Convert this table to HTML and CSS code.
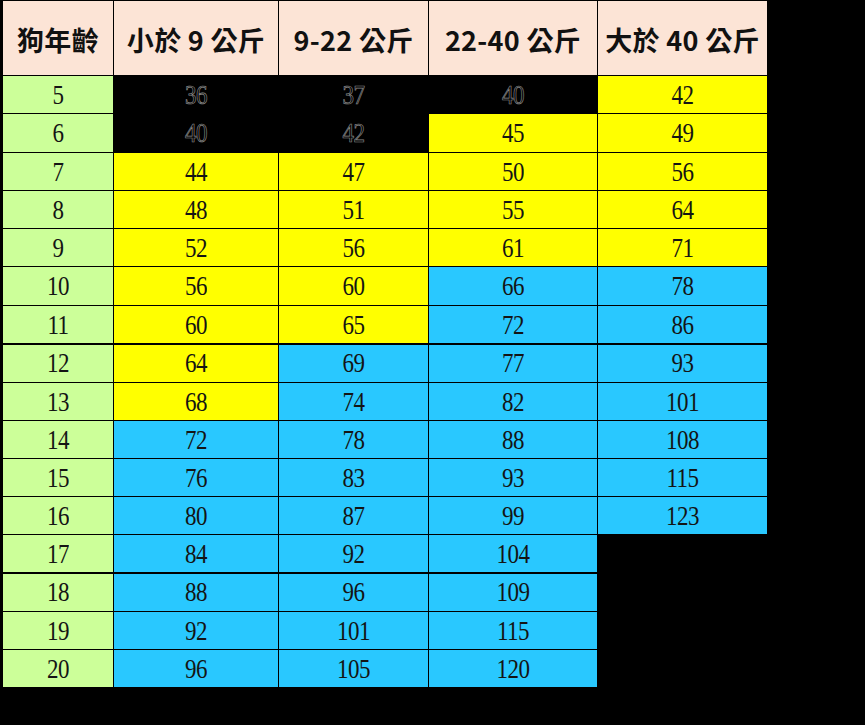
FILE: index.html
```html
<!DOCTYPE html>
<html lang="zh-Hant">
<head>
<meta charset="utf-8">
<title>狗年齡對照表</title>
<link rel="stylesheet" href="styles.css">
</head>
<body>
<div class="sheet">
  <div class="hd">狗年齡</div>
  <div class="hd">小於 9 公斤</div>
  <div class="hd">9-22 公斤</div>
  <div class="hd">22-40 公斤</div>
  <div class="hd">大於 40 公斤</div>

  <div class="age"><span>5</span></div><div class="dk"><span>36</span></div><div class="dk"><span>37</span></div><div class="dk"><span>40</span></div><div class="y"><span>42</span></div>
  <div class="age"><span>6</span></div><div class="dk"><span>40</span></div><div class="dk"><span>42</span></div><div class="y"><span>45</span></div><div class="y"><span>49</span></div>
  <div class="age"><span>7</span></div><div class="y"><span>44</span></div><div class="y"><span>47</span></div><div class="y"><span>50</span></div><div class="y"><span>56</span></div>
  <div class="age"><span>8</span></div><div class="y"><span>48</span></div><div class="y"><span>51</span></div><div class="y"><span>55</span></div><div class="y"><span>64</span></div>
  <div class="age"><span>9</span></div><div class="y"><span>52</span></div><div class="y"><span>56</span></div><div class="y"><span>61</span></div><div class="y"><span>71</span></div>
  <div class="age"><span>10</span></div><div class="y"><span>56</span></div><div class="y"><span>60</span></div><div class="b"><span>66</span></div><div class="b"><span>78</span></div>
  <div class="age"><span>11</span></div><div class="y"><span>60</span></div><div class="y"><span>65</span></div><div class="b"><span>72</span></div><div class="b"><span>86</span></div>
  <div class="age tk"><span>12</span></div><div class="y tk"><span>64</span></div><div class="b tk"><span>69</span></div><div class="b tk"><span>77</span></div><div class="b tk"><span>93</span></div>
  <div class="age"><span>13</span></div><div class="y"><span>68</span></div><div class="b"><span>74</span></div><div class="b"><span>82</span></div><div class="b"><span>101</span></div>
  <div class="age"><span>14</span></div><div class="b"><span>72</span></div><div class="b"><span>78</span></div><div class="b"><span>88</span></div><div class="b"><span>108</span></div>
  <div class="age"><span>15</span></div><div class="b"><span>76</span></div><div class="b"><span>83</span></div><div class="b"><span>93</span></div><div class="b"><span>115</span></div>
  <div class="age"><span>16</span></div><div class="b"><span>80</span></div><div class="b"><span>87</span></div><div class="b"><span>99</span></div><div class="b"><span>123</span></div>
  <div class="age"><span>17</span></div><div class="b"><span>84</span></div><div class="b"><span>92</span></div><div class="b"><span>104</span></div><div class="nil"></div>
  <div class="age tk"><span>18</span></div><div class="b tk"><span>88</span></div><div class="b tk"><span>96</span></div><div class="b tk"><span>109</span></div><div class="nil"></div>
  <div class="age"><span>19</span></div><div class="b"><span>92</span></div><div class="b"><span>101</span></div><div class="b"><span>115</span></div><div class="nil"></div>
  <div class="age"><span>20</span></div><div class="b"><span>96</span></div><div class="b"><span>105</span></div><div class="b"><span>120</span></div><div class="nil"></div>
</div>
</body>
</html>
```
FILE: styles.css
```css
html, body {
  margin: 0;
  padding: 0;
  background: #000;
  width: 865px;
  height: 725px;
  overflow: hidden;
}

.sheet {
  display: grid;
  grid-template-columns: 110px 164px 149px 168px 169px;
  grid-template-rows: 74px 37px 38px 37px 37px 37px 38px 37px 38px 37px 37px 37px 37px 37px 38px 37px 37px;
  gap: 1px;
  padding: 1px 0 0 3px;
  width: max-content;
  background: #000;
}

.sheet > div {
  display: flex;
  align-items: center;
  justify-content: center;
  font-family: "Liberation Serif", "Times New Roman", serif;
  font-size: 23px;
  color: #141414;
}

.sheet > div > span {
  display: inline-block;
  transform: scaleY(1.22);
  letter-spacing: -0.5px;
}

.sheet > .hd {
  background: #fce4d6;
  font-family: "Noto Sans CJK TC", "Noto Sans", sans-serif;
  font-weight: 700;
  font-size: 27px;
  color: #111;
  white-space: nowrap;
  letter-spacing: 0.3px;
  padding-top: 3px;
}

.age { background: #ccff99; }
.y { background: #ffff00; }
.b { background: #29c8ff; }
.nil { background: #000; }

.sheet > .dk {
  background: #000;
  color: #000;
  -webkit-text-stroke: 0.6px #8c8c8c;
}

.sheet > .tk {
  box-shadow: inset 0 1px 0 #000;
}
```
